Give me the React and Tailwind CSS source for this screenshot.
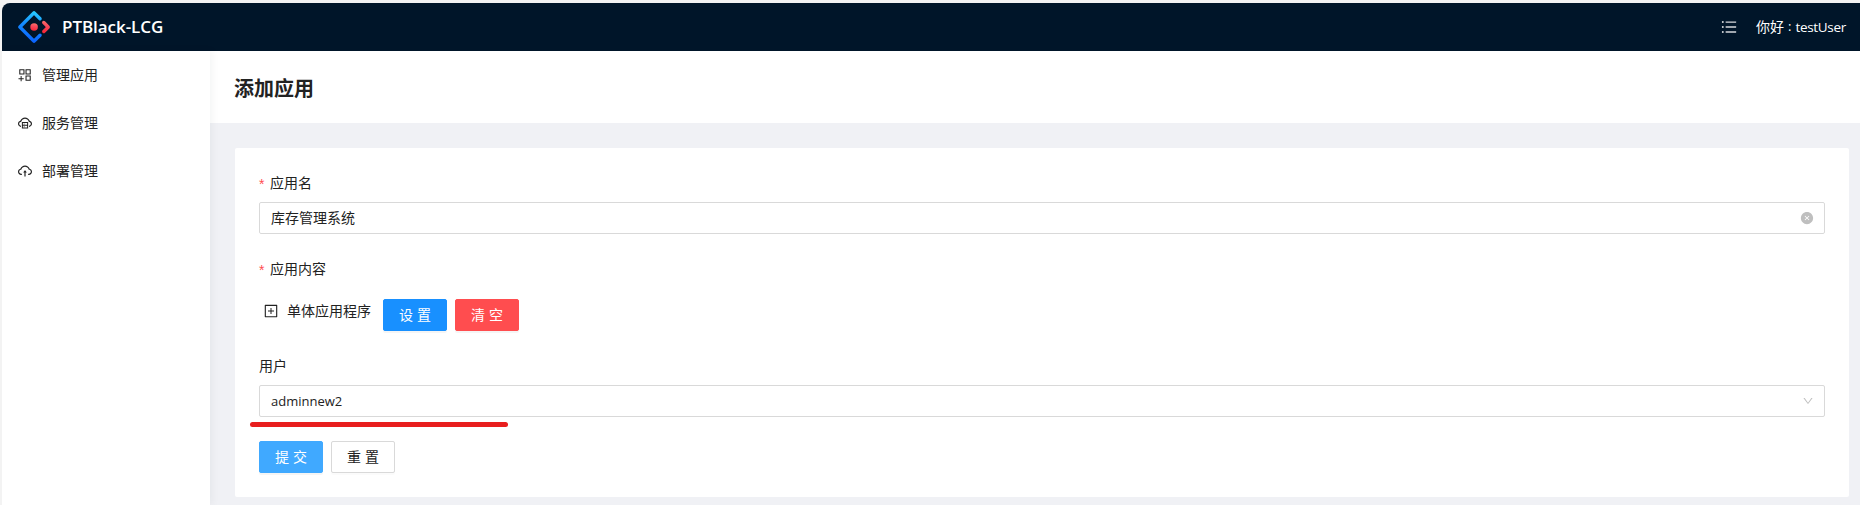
import {
  AiOutlineAppstoreAdd,
  AiOutlineCloudServer,
  AiOutlineCloudUpload,
  AiOutlineUnorderedList,
  AiOutlinePlusSquare,
  AiFillCloseCircle,
  AiOutlineDown,
} from "react-icons/ai";

const MENU = [
  { label: "管理应用", Icon: AiOutlineAppstoreAdd },
  { label: "服务管理", Icon: AiOutlineCloudServer },
  { label: "部署管理", Icon: AiOutlineCloudUpload },
];

function Logo() {
  return (
    <svg className="h-8 w-8 shrink-0" viewBox="0 0 200 200">
      <defs>
        <linearGradient id="blue" x1="62%" y1="0%" x2="50%" y2="100%">
          <stop offset="0%" stopColor="#29cdff" />
          <stop offset="40%" stopColor="#148eff" />
          <stop offset="100%" stopColor="#0a60ff" />
        </linearGradient>
        <linearGradient id="red" x1="69%" y1="-13%" x2="50%" y2="115%">
          <stop offset="0%" stopColor="#fa816e" />
          <stop offset="42%" stopColor="#f74a5c" />
          <stop offset="100%" stopColor="#f51d2c" />
        </linearGradient>
      </defs>
      <path
        fill="url(#blue)"
        d="M91.588 4.177L4.18 91.513c-4.7 4.695-4.7 12.279 0 16.974l87.408 87.336c4.7 4.696 12.289 4.696 16.989 0l36.648-36.618c4.209-4.205 4.209-11.023 0-15.228-4.208-4.205-11.031-4.205-15.24 0l-27.783 27.76c-1.17 1.17-2.945 1.17-4.114 0L28.286 101.993c-1.17-1.169-1.17-2.942 0-4.111l69.802-69.744c1.169-1.169 2.944-1.169 4.114 0l27.783 27.76c4.209 4.205 11.032 4.205 15.24 0 4.209-4.205 4.209-11.022 0-15.227L108.58 4.056c-4.718-4.594-12.311-4.556-16.992.12z"
      />
      <path
        fill="url(#red)"
        d="M153.686 135.855c4.208 4.205 11.031 4.205 15.24 0l27.034-27.012c4.7-4.696 4.7-12.28 0-16.974l-27.27-27.151c-4.218-4.2-11.043-4.194-15.254.014-4.209 4.205-4.209 11.022 0 15.227l18.418 18.403c1.17 1.169 1.17 2.943 0 4.111l-18.168 18.154c-4.209 4.205-4.209 11.023 0 15.228z"
      />
      <circle cx="100.5" cy="100.4" r="23.6" fill="url(#red)" />
    </svg>
  );
}

function Label({ required, children }) {
  return (
    <div className="flex h-[22px] items-center text-sm">
      {required && (
        <span className="mr-1 w-[7px] pt-[2px] font-['Liberation_Sans',sans-serif] text-sm text-[#ff4d4f]">*</span>
      )}
      <span>{children}</span>
    </div>
  );
}

function Button({ className, children }) {
  return (
    <button
      className={`flex h-8 w-16 items-center justify-center gap-1 rounded-[2px] border text-sm ${className}`}
    >
      {[...children].map((c) => (
        <span key={c}>{c}</span>
      ))}
    </button>
  );
}

export default function App() {
  return (
    <div className="h-[505px] w-full overflow-hidden bg-[#f3f3f3] pt-[3px] pl-[2px] font-['Open_Sans','Noto_Sans_CJK_SC',sans-serif] text-[#222]">
      <div className="flex h-full flex-col overflow-hidden rounded-tl-lg bg-[#f0f2f5]">
        <header className="flex h-12 shrink-0 items-center bg-[#001529] pr-[14px] pl-4 text-white">
          <Logo />
          <h1 className="ml-3 text-[17px] font-semibold tracking-[-0.05px] whitespace-nowrap">
            PTBlack-LCG
          </h1>
          <AiOutlineUnorderedList className="ml-auto h-[18px] w-[18px] text-[#d5d8dc]" />
          <span className="ml-[18px] flex w-[90px] items-center whitespace-nowrap">
            <span className="text-sm">你好</span>
            <span className="ml-1 text-[13px]">:</span>
            <span className="ml-auto text-[13.5px] tracking-[-0.3px]">testUser</span>
          </span>
        </header>
        <div className="flex min-h-0 flex-1">
          <aside className="z-10 flex w-52 shrink-0 flex-col gap-2 bg-white pt-1 shadow-[2px_0_8px_0_rgba(29,35,41,0.05)]">
            {MENU.map(({ label, Icon }) => (
              <a key={label} className="flex h-10 items-center gap-[9px] pl-[15px] text-sm">
                <Icon className="h-4 w-4" />
                {label}
              </a>
            ))}
          </aside>
          <main className="flex min-w-0 flex-1 flex-col bg-[#f0f1f5]">
            <div className="flex h-[72px] shrink-0 items-center bg-white pt-[3px] pl-6">
              <h2 className="text-xl font-bold">添加应用</h2>
            </div>
            <section className="mt-[25px] mr-[11px] ml-[25px] h-[349px] rounded-[2px] bg-white px-6 pt-6">
              <Label required>应用名</Label>
              <div className="mt-2 flex h-8 items-center justify-between rounded-[2px] border border-[#d9d9d9] pr-[10px] pl-[11px] text-sm">
                <span>库存管理系统</span>
                <AiFillCloseCircle className="h-[14px] w-[14px] text-[#bfbfbf]" />
              </div>
              <div className="mt-6">
                <Label required>应用内容</Label>
              </div>
              <div className="mt-[19px] flex h-8">
                <div className="flex h-6 w-[124px] items-center text-sm">
                  <AiOutlinePlusSquare className="mr-2 ml-1 h-4 w-4" />
                  单体应用程序
                </div>
                <Button className="border-[#1890ff] bg-[#1890ff] text-white shadow-[0_2px_0_rgba(0,0,0,0.04)]">
                  设置
                </Button>
                <Button className="ml-2 border-[#ff4d4f] bg-[#ff4d4f] text-white shadow-[0_2px_0_rgba(0,0,0,0.04)]">
                  清空
                </Button>
              </div>
              <div className="mt-6">
                <Label>用户</Label>
              </div>
              <div className="relative mt-2 flex h-8 items-center justify-between rounded-[2px] border border-[#d9d9d9] pr-[10px] pl-[11px] text-sm">
                <span className="text-[13px]">adminnew2</span>
                <AiOutlineDown className="h-3 w-3 text-[#bfbfbf]" />
                <div className="absolute top-[36px] left-[-10px] h-[5px] w-[258px] rounded-full bg-[#e81e1e]" />
              </div>
              <div className="mt-6 flex gap-2">
                <Button className="border-[#40a9ff] bg-[#40a9ff] text-white shadow-[0_2px_0_rgba(0,0,0,0.04)]">
                  提交
                </Button>
                <Button className="border-[#d9d9d9] bg-white shadow-[0_2px_0_rgba(0,0,0,0.015)]">
                  重置
                </Button>
              </div>
            </section>
          </main>
        </div>
      </div>
    </div>
  );
}
